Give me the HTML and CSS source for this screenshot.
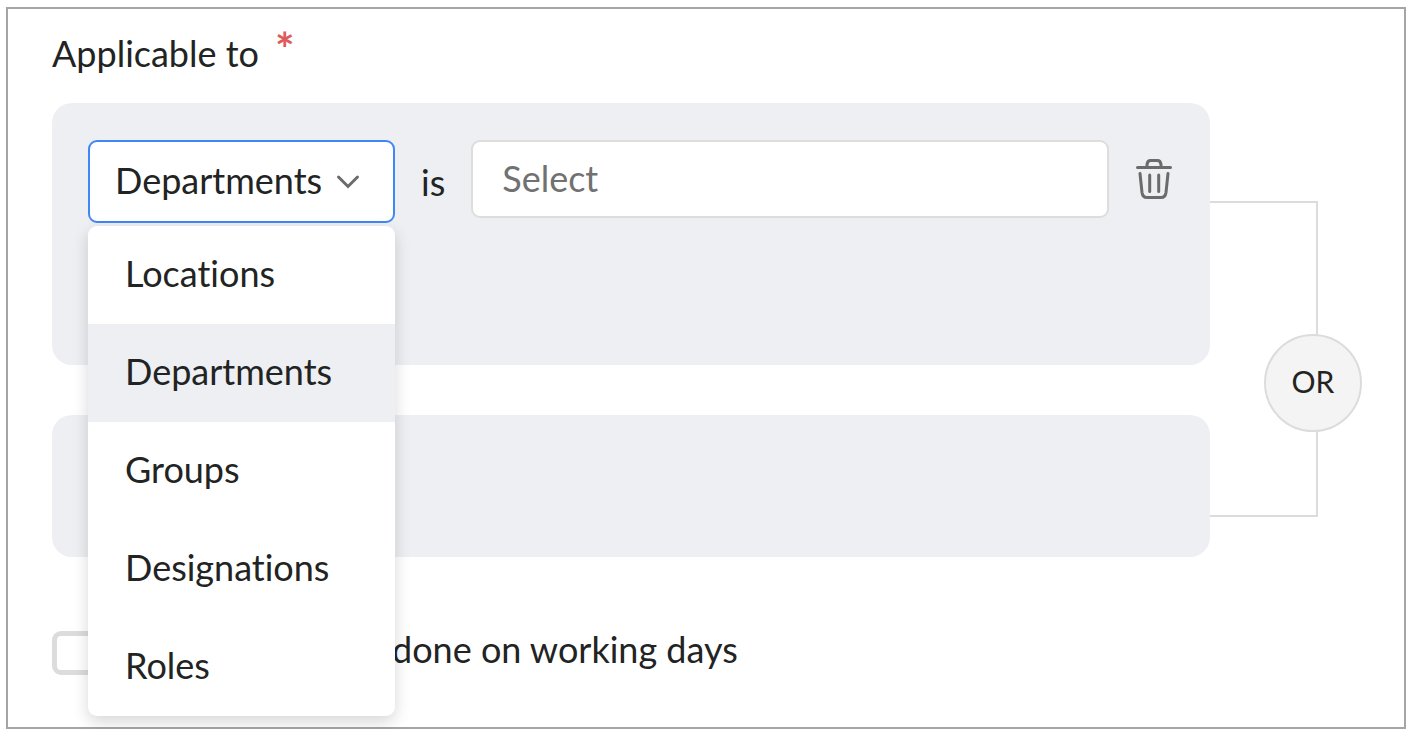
FILE: index.html
```html
<!DOCTYPE html>
<html lang="en">
<head>
<meta charset="utf-8">
<title>Applicable to</title>
<link rel="stylesheet" href="styles.css">
</head>
<body>
<form class="panel">
  <h1 class="title">Applicable to <span class="required">*</span></h1>
  <div class="criteria">
    <div class="groups">
      <section class="group group-first">
        <div class="rule">
          <div class="picker">
            <select class="picker-select" aria-label="Criteria type">
              <option>Locations</option>
              <option selected>Departments</option>
              <option>Groups</option>
              <option>Designations</option>
              <option>Roles</option>
            </select>
            <svg class="chevron" viewBox="0 0 24 16" aria-hidden="true"><path d="M2.500 3 L12 12.500 L21.500 3"/></svg>
            <ul class="menu" role="listbox" aria-label="Criteria types">
              <li class="menu-item" role="option">Locations</li>
              <li class="menu-item menu-item-active" role="option" aria-selected="true">Departments</li>
              <li class="menu-item" role="option">Groups</li>
              <li class="menu-item" role="option">Designations</li>
              <li class="menu-item" role="option">Roles</li>
            </ul>
          </div>
          <label class="operator" for="value">is</label>
          <input class="value" id="value" type="text" placeholder="Select">
          <button class="delete" type="button" aria-label="Delete">
            <svg class="trash" viewBox="0 0 40 44" aria-hidden="true">
              <path d="M3.500 11.500H36.500M13 11V8.500Q13.500 4.500 16.500 4.500H23.500Q26.500 4.500 27 8.500V11M6 17.500L8 36.500Q8.700 41.500 13 41.500H27Q31.300 41.500 32 36.500L34 17.500M15.700 19V35.500M24.700 19V35.500"/>
            </svg>
          </button>
        </div>
      </section>
      <section class="group group-second"></section>
    </div>
    <div class="connector"><span class="badge">OR</span></div>
  </div>
  <div class="option">
    <input class="check" id="working" type="checkbox">
    <label class="option-label" for="working">done on working days</label>
  </div>
</form>
</body>
</html>
```
FILE: styles.css
```css
* { box-sizing: border-box; }

body {
  margin: 7px 8px 7px 6px;
  background: #fff;
  color: #222423;
  font-family: Lato, "Liberation Sans", sans-serif;
  font-size: 36px;
  font-variant-ligatures: none;
  line-height: 44px;
}

.panel {
  border: 2px solid #a5a5a5;
  padding: 22px 86px 52px 44px;
}

.title {
  display: flex;
  gap: 16px;
  margin: 0 0 28px;
  font-size: 36px;
  font-weight: 400;
  line-height: 44px;
}

.required {
  height: 44px;
  color: #de5b5b;
  font-size: 46px;
  font-weight: 700;
  line-height: 36px;
}

.criteria { display: flex; }

.groups {
  flex: 1;
  display: flex;
  flex-direction: column;
  gap: 50px;
}

.group { background: #eeeff3; border-radius: 20px; }
.group-first { padding: 37px 36px 142px; }
.group-second { height: 142px; }

.rule { display: flex; align-items: flex-start; }

.picker { position: relative; width: 307px; }

.picker-select {
  appearance: none;
  display: block;
  width: 100%;
  height: 83px;
  padding: 0 25px 4px;
  border: 2px solid #3f86f7;
  border-radius: 9px;
  background: #fff;
  color: inherit;
  font: inherit;
}

.chevron {
  position: absolute;
  top: 34px;
  right: 35px;
  width: 24px;
  height: 16px;
  fill: none;
  stroke: #6b6b6b;
  stroke-width: 3;
  stroke-linecap: round;
  pointer-events: none;
}

.menu {
  position: absolute;
  z-index: 1;
  top: 86px;
  left: 0;
  width: 100%;
  margin: 0;
  padding: 0;
  list-style: none;
  overflow: hidden;
  border-radius: 9px;
  background: #fff;
  box-shadow: 0 6px 16px rgba(0, 0, 0, 0.16);
}

.menu-item { padding: 25px 37px 29px; }
.menu-item-active { background: #eeeff3; }

.operator { margin: 20px 26px 0; }

.value {
  flex: 1;
  min-width: 0;
  height: 78px;
  padding: 0 29px 2px;
  border: 2px solid #dcdddc;
  border-radius: 9px;
  background: #fff;
  font: inherit;
}

.value::placeholder { color: #717171; opacity: 1; }

.delete {
  margin: 16px 0 0 25px;
  padding: 0;
  border: 0;
  background: none;
}

.trash {
  display: block;
  width: 40px;
  height: 44px;
  fill: none;
  stroke: #6b6b6b;
  stroke-width: 3;
  stroke-linecap: round;
}

.connector {
  position: relative;
  width: 108px;
  margin: 98px 0 40px;
  border: 2px solid #dcdcdc;
  border-left: 0;
}

.badge {
  position: absolute;
  top: 131px;
  right: -46px;
  width: 98px;
  height: 98px;
  padding-bottom: 4px;
  border: 2px solid #dcdcdc;
  border-radius: 50%;
  background: #f4f4f4;
  font-size: 30px;
  line-height: 90px;
  text-align: center;
}

.option { display: flex; align-items: flex-start; margin-top: 74px; }

.check {
  appearance: none;
  width: 44px;
  height: 44px;
  margin: 0;
  border: 5px solid #dcdcdc;
  border-radius: 9px;
}

.option-label { margin: -4px 0 4px 296px; }
```
